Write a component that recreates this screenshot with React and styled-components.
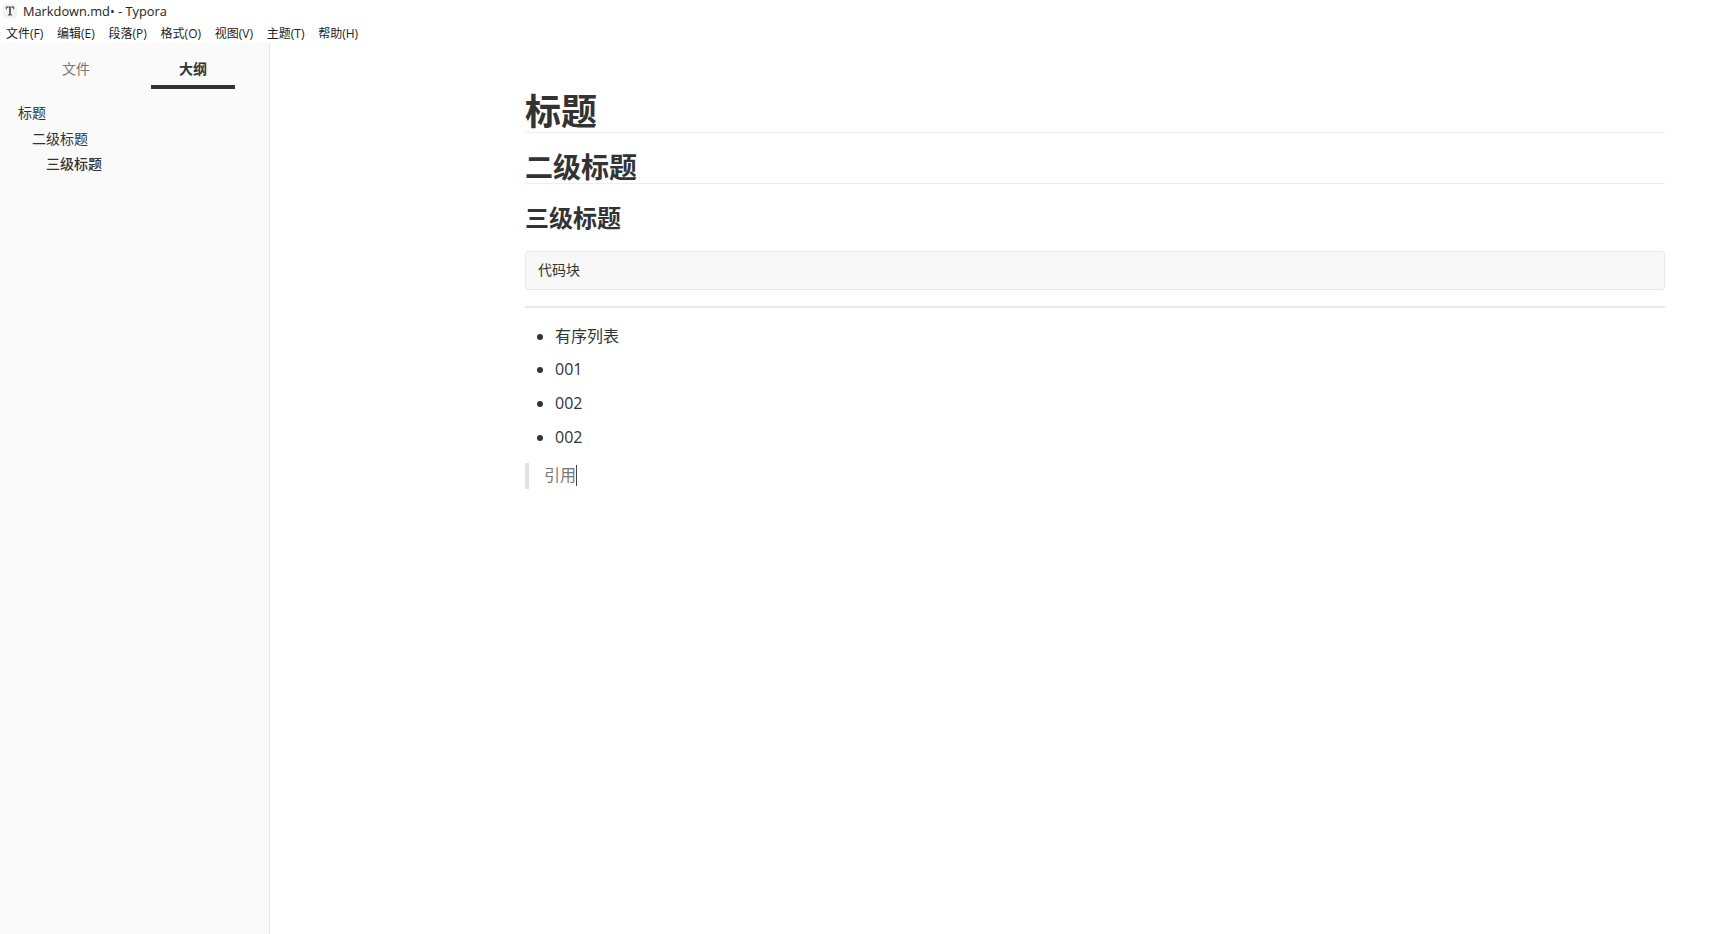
import React from "react";
import styled, { createGlobalStyle } from "styled-components";

const Global = createGlobalStyle`
  html, body { margin: 0; padding: 0; height: 100%; background: #fff; overflow: hidden; }
  #root { height: 100%; }
`;
const FONT = `"Open Sans", "Noto Sans CJK SC", sans-serif`;
const Win = styled.div`
  width: 1736px; height: 934px; display: flex; flex-direction: column;
  font-family: ${FONT}; color: #333; background: #fff;
`;
const TitleBar = styled.div`
  height: 22px; display: flex; align-items: center; padding-left: 3px; gap: 6px;
  font-size: 12.8px; color: #222;
`;
const AppIcon = styled.svg`width: 14px; height: 14px; flex: none;`;
const MenuBar = styled.div`
  height: 21px; display: flex; align-items: center; padding-left: 6px; gap: 13.75px;
  font-size: 12px; color: #222;
`;
const Body = styled.div`flex: 1; display: flex; min-height: 0;`;
const Sidebar = styled.aside`
  width: 269px; flex: none; background: #fafafa; border-right: 1px solid #e6e6e6;
  display: flex; flex-direction: column;
`;
const Tabs = styled.div`
  height: 46px; display: flex; padding-left: 34px; gap: 33px;
`;
const Tab = styled.div`
  width: 84px; height: 34px; padding-top: 8px; display: flex; align-items: center; justify-content: center;
  font-size: 14px;
  color: ${p => (p.$active ? "#333" : "#777")};
  font-weight: ${p => (p.$active ? 700 : 400)};
  border-bottom: 4px solid ${p => (p.$active ? "#333" : "transparent")};
`;
const Outline = styled.nav`padding: 11px 0 0 18px; display: flex; flex-direction: column;`;
const OutlineItem = styled.div`
  height: 25.5px; line-height: 25.5px; font-size: 14px; padding-left: ${p => p.$level * 14}px;
  color: #333; font-weight: ${p => (p.$active ? 500 : 400)};
`;
const Main = styled.main`flex: 1; padding: 43px 0 0 255px; min-width: 0;`;
const Doc = styled.article`width: 1140px;`;
const H1 = styled.h1`
  margin: 0; padding-top: 5px; font-size: 36px; font-weight: 700; line-height: 41px; height: 41px;
  border-bottom: 1px solid #eee; color: #333;
`;
const H2 = styled.h2`
  margin: 14px 0 0; padding-top: 4px; font-size: 28px; font-weight: 700; line-height: 32px; height: 32px;
  border-bottom: 1px solid #eee; color: #333;
`;
const H3 = styled.h3`
  margin: 15px 0 0; padding-top: 2px; font-size: 24px; font-weight: 700; line-height: 33px; height: 33px; color: #333;
`;
const CodeBlock = styled.pre`
  margin: 17px 0 0; height: 39px; box-sizing: border-box; padding: 0 12px; line-height: 35px;
  background: #f8f8f8; border: 1px solid #e7eaed; border-radius: 3px;
  font-family: ${FONT}; font-size: 14px; color: #333;
`;
const Rule = styled.hr`margin: 16px 0 0; height: 2px; border: 0; background: #e7e7e7;`;
const List = styled.ul`margin: 11px 0 0; padding: 0 0 0 30px; list-style: disc;`;
const Item = styled.li`
  height: ${p => (p.$first ? 33 : 34)}px; line-height: 34px; font-size: 16px; color: #333;
`;
const Quote = styled.blockquote`
  margin: 9px 0 0; height: 26px; line-height: 25px; box-sizing: border-box; padding-left: 15px;
  border-left: 4px solid #dfe2e5; color: #777; font-size: 16px; display: flex;
`;
const Caret = styled.span`width: 1px; height: 21px; margin-top: 2px; background: #444; display: block;`;

export default function App() {
  return (
    <Win>
      <Global />
      <TitleBar>
        <AppIcon viewBox="0 0 14 14">
          <rect x="0" y="0" width="14" height="14" rx="2.5" fill="#f3f3f3" />
          <path d="M2.8 2.6h8.4v3h-.8c-.2-1.2-.6-2-1.6-2H7.9v6.6l1.2.4v.8H4.9v-.8l1.2-.4V3.6H5.2c-1 0-1.4.8-1.6 2h-.8z" fill="#555" />
        </AppIcon>
        <span>Markdown.md• - Typora</span>
      </TitleBar>
      <MenuBar>
        {["文件(F)", "编辑(E)", "段落(P)", "格式(O)", "视图(V)", "主题(T)", "帮助(H)"].map(m => (
          <span key={m}>{m}</span>
        ))}
      </MenuBar>
      <Body>
        <Sidebar>
          <Tabs>
            <Tab>文件</Tab>
            <Tab $active>大纲</Tab>
          </Tabs>
          <Outline>
            <OutlineItem $level={0}>标题</OutlineItem>
            <OutlineItem $level={1}>二级标题</OutlineItem>
            <OutlineItem $level={2} $active>三级标题</OutlineItem>
          </Outline>
        </Sidebar>
        <Main>
          <Doc>
            <H1>标题</H1>
            <H2>二级标题</H2>
            <H3>三级标题</H3>
            <CodeBlock>代码块</CodeBlock>
            <Rule />
            <List>
              <Item $first>有序列表</Item>
              <Item>001</Item>
              <Item>002</Item>
              <Item>002</Item>
            </List>
            <Quote>引用<Caret /></Quote>
          </Doc>
        </Main>
      </Body>
    </Win>
  );
}
